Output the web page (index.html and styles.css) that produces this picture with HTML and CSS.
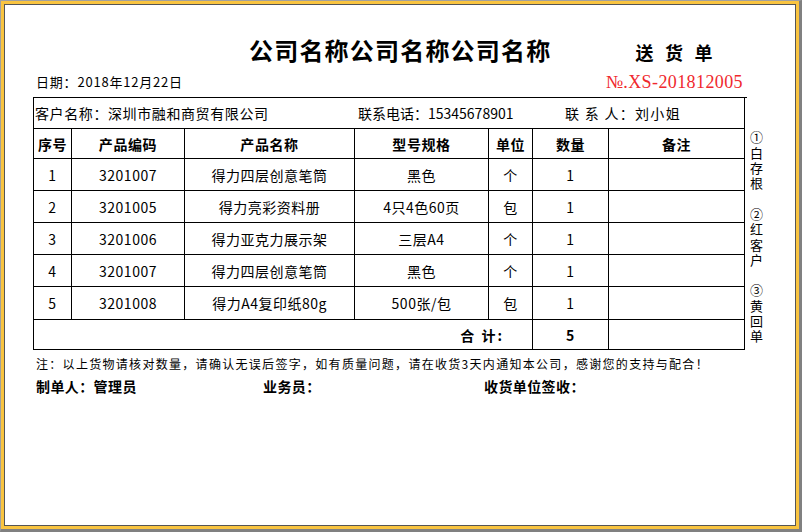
FILE: index.html
```html
<!DOCTYPE html>
<html lang="zh-CN">
<head>
<meta charset="utf-8">
<title>送货单</title>
<link rel="stylesheet" href="styles.css">
</head>
<body>
<div class="window">
  <div class="frame">
    <div class="paper">
      <div class="title-row">
        <h1 class="company">公司名称公司名称公司名称</h1>
        <div class="doc-type">送货单</div>
      </div>
      <div class="meta-row">
        <span class="date">日期：2018年12月22日</span>
        <span class="number">№.XS-201812005</span>
      </div>
      <div class="sheet">
        <div class="grid">
          <div class="cell customer">
            <span class="cust-name">客户名称：深圳市融和商贸有限公司</span>
            <span class="cust-phone">联系电话：15345678901</span>
            <span class="cust-contact">联&nbsp;系&nbsp;人：刘小姐</span>
          </div>
          <div class="cell head">序号</div>
          <div class="cell head">产品编码</div>
          <div class="cell head">产品名称</div>
          <div class="cell head">型号规格</div>
          <div class="cell head">单位</div>
          <div class="cell head">数量</div>
          <div class="cell head">备注</div>

          <div class="cell">1</div><div class="cell">3201007</div><div class="cell">得力四层创意笔筒</div><div class="cell">黑色</div><div class="cell">个</div><div class="cell">1</div><div class="cell"></div>
          <div class="cell">2</div><div class="cell">3201005</div><div class="cell">得力亮彩资料册</div><div class="cell">4只4色60页</div><div class="cell">包</div><div class="cell">1</div><div class="cell"></div>
          <div class="cell">3</div><div class="cell">3201006</div><div class="cell">得力亚克力展示架</div><div class="cell">三层A4</div><div class="cell">个</div><div class="cell">1</div><div class="cell"></div>
          <div class="cell">4</div><div class="cell">3201007</div><div class="cell">得力四层创意笔筒</div><div class="cell">黑色</div><div class="cell">个</div><div class="cell">1</div><div class="cell"></div>
          <div class="cell">5</div><div class="cell">3201008</div><div class="cell">得力A4复印纸80g</div><div class="cell">500张/包</div><div class="cell">包</div><div class="cell">1</div><div class="cell"></div>

          <div class="cell total-label">合&nbsp;计:</div>
          <div class="cell total-value">5</div>
          <div class="cell"></div>
        </div>
        <div class="copies">①白存根　②红客户　③黄回单</div>
      </div>
      <p class="note">注：以上货物请核对数量，请确认无误后签字，如有质量问题，请在收货3天内通知本公司，感谢您的支持与配合！</p>
      <div class="signs">
        <span class="sign-maker">制单人：管理员</span>
        <span class="sign-sales">业务员：</span>
        <span class="sign-receiver">收货单位签收：</span>
      </div>
    </div>
  </div>
</div>
</body>
</html>
```

FILE: styles.css
```css
* { box-sizing: border-box; }

html, body {
  margin: 0;
  padding: 0;
  background: #808080;
}

body {
  font-family: "Noto Sans CJK SC", "Liberation Sans", sans-serif;
  color: #000;
}

.window {
  width: 802px;
  height: 532px;
  border-style: solid;
  border-width: 1px 3px 3px 1px;
  border-color: #a0a0a0 #808080 #808080 #a0a0a0;
}

.frame {
  height: 100%;
  border: 3px solid #f9c440;
}

.paper {
  height: 100%;
  background: #fff;
  border: 1px solid #555;
  padding: 29px 0 0 28px;
}

.title-row {
  display: flex;
  align-items: center;
  height: 32px;
}

.company {
  margin: 0 0 0 216px;
  font-size: 24px;
  line-height: 32px;
  font-weight: 700;
  letter-spacing: 1.2px;
  white-space: nowrap;
}

.doc-type {
  margin: 4px 0 0 84px;
  font-size: 18px;
  font-weight: 700;
  letter-spacing: 11.5px;
  line-height: 24px;
}

.meta-row {
  width: 712px;
  display: flex;
  justify-content: space-between;
  align-items: center;
  height: 20px;
  margin-top: 6px;
}

.date {
  padding-left: 3px;
  font-size: 13px;
  line-height: 20px;
  letter-spacing: 0.8px;
}

.number {
  font-family: "Liberation Serif", serif;
  font-size: 18px;
  line-height: 20px;
  color: #f0282d;
  padding-right: 2px;
  letter-spacing: 0.4px;
}

.sheet {
  display: flex;
  align-items: flex-start;
  margin-top: 5px;
}

.grid {
  display: grid;
  grid-template-columns: 38px 113px 170px 134px 44px 76px 136px;
  grid-template-rows: 31px 30px 32px 32px 32px 32px 33px 30px;
  border-top: 1px solid #000;
  border-left: 1px solid #000;
  width: 714px;
}

.cell {
  border-right: 1px solid #000;
  border-bottom: 1px solid #000;
  display: flex;
  align-items: center;
  justify-content: center;
  font-size: 14px;
  letter-spacing: 0.5px;
  white-space: nowrap;
}

.customer {
  grid-column: 1 / -1;
  justify-content: flex-start;
  padding-left: 1px;
  letter-spacing: 0.6px;
}

.cust-name { width: 323px; }
.cust-phone { width: 207px; letter-spacing: 0; }
.cust-contact { letter-spacing: 1.3px; }

.head {
  font-weight: 700;
  letter-spacing: 0.6px;
}

.total-label {
  grid-column: 1 / 6;
  justify-content: flex-end;
  padding-right: 28px;
  font-weight: 700;
  letter-spacing: 2px;
}

.total-value {
  font-weight: 700;
}

.copies {
  writing-mode: vertical-rl;
  text-orientation: upright;
  margin: 34px 0 0 2px;
  font-size: 13px;
  line-height: 14px;
  letter-spacing: 2.3px;
  white-space: nowrap;
}

.note {
  margin: 6px 0 0 3px;
  font-size: 12px;
  line-height: 16px;
  letter-spacing: 1.3px;
  white-space: nowrap;
}

.signs {
  display: flex;
  margin: 5px 0 0 3px;
  font-size: 14px;
  font-weight: 700;
  line-height: 18px;
  letter-spacing: 0.4px;
}

.sign-maker { width: 227px; }
.sign-sales { width: 221px; }
```
